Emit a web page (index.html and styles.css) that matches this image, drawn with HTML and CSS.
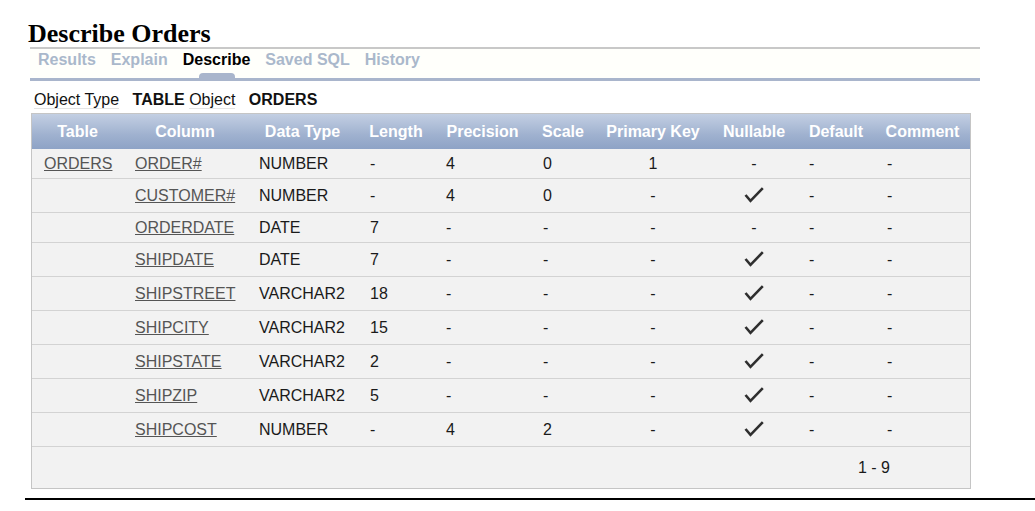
FILE: index.html
```html
<!DOCTYPE html>
<html>
<head>
<meta charset="utf-8">
<title>Describe Orders</title>
<link rel="stylesheet" href="styles.css">
</head>
<body>
<div class="page">
  <h1 class="title">Describe Orders</h1>
  <div class="tabs">
    <div class="tab"><span class="tab-label">Results</span><span class="tab-mark"></span></div>
    <div class="tab"><span class="tab-label">Explain</span><span class="tab-mark"></span></div>
    <div class="tab active"><span class="tab-label">Describe</span><span class="tab-mark"></span></div>
    <div class="tab"><span class="tab-label">Saved SQL</span><span class="tab-mark"></span></div>
    <div class="tab"><span class="tab-label">History</span><span class="tab-mark"></span></div>
  </div>
  <div class="objinfo">
    <span class="lbl">Object Type</span>
    <span class="val">TABLE</span>
    <span class="lbl">Object</span>
    <span class="val">ORDERS</span>
  </div>
  <table class="desc">
    <colgroup>
      <col class="c-table"><col class="c-col"><col class="c-type"><col class="c-len"><col class="c-prec">
      <col class="c-scale"><col class="c-pk"><col class="c-null"><col class="c-def"><col class="c-com">
    </colgroup>
    <thead>
      <tr>
        <th>Table</th><th>Column</th><th>Data Type</th><th>Length</th><th>Precision</th>
        <th>Scale</th><th>Primary Key</th><th>Nullable</th><th>Default</th><th>Comment</th>
      </tr>
    </thead>
    <tbody>
      <tr class="short">
        <td><a href="#">ORDERS</a></td><td><a href="#">ORDER#</a></td><td>NUMBER</td><td>-</td><td>4</td>
        <td>0</td><td class="ctr">1</td><td class="ctr">-</td><td>-</td><td>-</td>
      </tr>
      <tr class="tall">
        <td></td><td><a href="#">CUSTOMER#</a></td><td>NUMBER</td><td>-</td><td>4</td>
        <td>0</td><td class="ctr">-</td><td class="ctr"><svg class="chk" viewBox="0 0 20 17" width="20" height="17"><path d="M1.5 9 L6.5 14.8 L18.8 2.2"/></svg></td><td>-</td><td>-</td>
      </tr>
      <tr class="short">
        <td></td><td><a href="#">ORDERDATE</a></td><td>DATE</td><td>7</td><td>-</td>
        <td>-</td><td class="ctr">-</td><td class="ctr">-</td><td>-</td><td>-</td>
      </tr>
      <tr class="tall">
        <td></td><td><a href="#">SHIPDATE</a></td><td>DATE</td><td>7</td><td>-</td>
        <td>-</td><td class="ctr">-</td><td class="ctr"><svg class="chk" viewBox="0 0 20 17" width="20" height="17"><path d="M1.5 9 L6.5 14.8 L18.8 2.2"/></svg></td><td>-</td><td>-</td>
      </tr>
      <tr class="tall">
        <td></td><td><a href="#">SHIPSTREET</a></td><td>VARCHAR2</td><td>18</td><td>-</td>
        <td>-</td><td class="ctr">-</td><td class="ctr"><svg class="chk" viewBox="0 0 20 17" width="20" height="17"><path d="M1.5 9 L6.5 14.8 L18.8 2.2"/></svg></td><td>-</td><td>-</td>
      </tr>
      <tr class="tall">
        <td></td><td><a href="#">SHIPCITY</a></td><td>VARCHAR2</td><td>15</td><td>-</td>
        <td>-</td><td class="ctr">-</td><td class="ctr"><svg class="chk" viewBox="0 0 20 17" width="20" height="17"><path d="M1.5 9 L6.5 14.8 L18.8 2.2"/></svg></td><td>-</td><td>-</td>
      </tr>
      <tr class="tall">
        <td></td><td><a href="#">SHIPSTATE</a></td><td>VARCHAR2</td><td>2</td><td>-</td>
        <td>-</td><td class="ctr">-</td><td class="ctr"><svg class="chk" viewBox="0 0 20 17" width="20" height="17"><path d="M1.5 9 L6.5 14.8 L18.8 2.2"/></svg></td><td>-</td><td>-</td>
      </tr>
      <tr class="tall">
        <td></td><td><a href="#">SHIPZIP</a></td><td>VARCHAR2</td><td>5</td><td>-</td>
        <td>-</td><td class="ctr">-</td><td class="ctr"><svg class="chk" viewBox="0 0 20 17" width="20" height="17"><path d="M1.5 9 L6.5 14.8 L18.8 2.2"/></svg></td><td>-</td><td>-</td>
      </tr>
      <tr class="tall">
        <td></td><td><a href="#">SHIPCOST</a></td><td>NUMBER</td><td>-</td><td>4</td>
        <td>2</td><td class="ctr">-</td><td class="ctr"><svg class="chk" viewBox="0 0 20 17" width="20" height="17"><path d="M1.5 9 L6.5 14.8 L18.8 2.2"/></svg></td><td>-</td><td>-</td>
      </tr>
      <tr class="foot">
        <td colspan="10">1 - 9</td>
      </tr>
    </tbody>
  </table>
</div>
<div class="rule"></div>
</body>
</html>
```

FILE: styles.css
```css
html, body {
  margin: 0;
  padding: 0;
  background: #ffffff;
}

body {
  font-family: "Liberation Sans", Arial, sans-serif;
  font-size: 16px;
  color: #1a1a1a;
}

.page {
  padding-left: 30px;
  width: 950px;
}

.title {
  margin: 20px 0 0 -2px;
  font-family: "Liberation Serif", "Times New Roman", serif;
  font-weight: bold;
  font-size: 26px;
  line-height: 27px;
  color: #000;
}

.tabs {
  display: flex;
  gap: 15px;
  border-top: 2px solid #c8c8c8;
  border-bottom: 3px solid #a9b5cc;
  padding: 2px 0 0 8px;
  background: #fffffb;
}

.tab {
  display: flex;
  flex-direction: column;
  align-items: center;
}

.tab-label {
  font-weight: bold;
  font-size: 16px;
  line-height: 18px;
  color: #aab8cb;
  white-space: nowrap;
}

.tab-mark {
  width: 36px;
  height: 5px;
  margin-top: 4px;
  border-radius: 4px 4px 0 0;
  background: transparent;
}

.tab.active .tab-label {
  color: #000;
}

.tab.active .tab-mark {
  background: #a9b5cc;
}

.objinfo {
  margin: 10px 0 0 4px;
  line-height: 18px;
  font-size: 16px;
  color: #111;
}

.objinfo .lbl {
  border-bottom: 1px solid #e4e4e4;
}

.objinfo .val {
  font-weight: bold;
  margin: 0 0 0 9px;
}

.desc {
  margin: 4px 0 0 1px;
  width: 940px;
  table-layout: fixed;
  border-collapse: separate;
  border-spacing: 0;
  border: 1px solid #c5c5c5;
  background: #f2f2f2;
}

.c-table { width: 91px; }
.c-col { width: 124px; }
.c-type { width: 111px; }
.c-len { width: 76px; }
.c-prec { width: 97px; }
.c-scale { width: 64px; }
.c-pk { width: 116px; }
.c-null { width: 86px; }
.c-def { width: 78px; }
.c-com { width: 95px; }

.desc th {
  height: 34px;
  padding: 1px 4px 0;
  text-align: center;
  font-weight: bold;
  font-size: 16px;
  color: #ffffff;
  white-space: nowrap;
  background: linear-gradient(#c3cfe3, #9fb1cf 60%, #8ea3c6);
}

.desc td {
  padding: 0 0 0 12px;
  border-top: 1px solid #d3d3d3;
  font-size: 16px;
  color: #1a1a1a;
  white-space: nowrap;
  vertical-align: middle;
}

.desc tbody tr:first-child td {
  border-top: none;
}

.desc tr.short td {
  height: 29px;
}

.desc tr.tall td {
  height: 33px;
}

.desc td.ctr {
  padding: 0;
  text-align: center;
}

.desc a {
  color: #555555;
  text-decoration: underline;
}

.chk {
  display: inline-block;
  vertical-align: middle;
  margin-top: -4px;
}

.chk path {
  fill: none;
  stroke: #2f2f2f;
  stroke-width: 2.6;
  stroke-linejoin: miter;
}

.desc tr.foot td {
  height: 41px;
  text-align: right;
  padding: 0 80px 0 0;
}

.rule {
  margin: 9px 0 0 25px;
  height: 1.5px;
  background: #000;
}
```
